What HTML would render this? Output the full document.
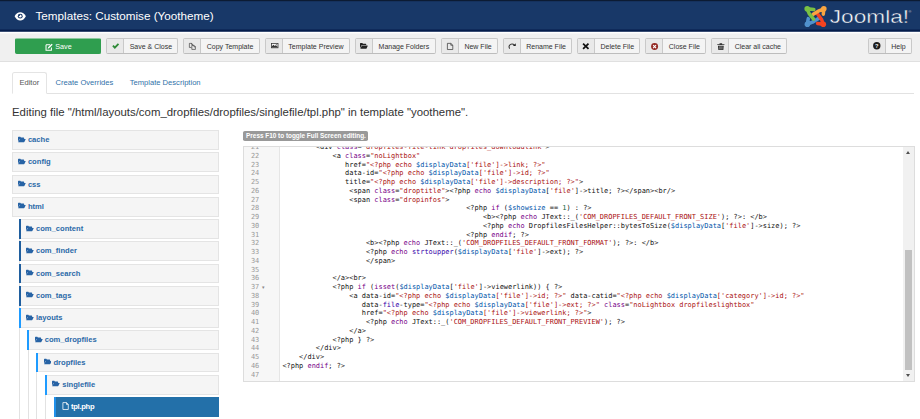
<!DOCTYPE html>
<html><head><meta charset="utf-8"><title>Templates: Customise (Yootheme)</title>
<style>
*{box-sizing:border-box}
html,body{margin:0;padding:0}
body{width:920px;height:419px;overflow:hidden;background:#fff;font-family:"Liberation Sans",Arial,sans-serif;color:#333;position:relative}
i{font-style:normal}
#hd{position:absolute;left:0;top:0;width:920px;height:32px;background:#183868;background-image:linear-gradient(to bottom,#0c1b33 0,#0c1b33 1px,#15315d 1px,#15315d 2px,#183868 2px,#183868 29px,#0f2a5a 29px,#0f2a5a 30px,#041c4a 30px,#041c4a 31px,#3a4e74 31px,#3a4e74 32px)}
#hdt{display:none}
#hd .eye{position:absolute;left:14.4px;top:11.9px;width:12.5px;height:8.7px}
#hd h1{position:absolute;left:35.5px;top:8.2px;margin:0;font-size:11.7px;line-height:15px;font-weight:normal;color:#fff;white-space:nowrap}
.logo{position:absolute;left:800px;top:2px;width:32px;height:28px}
#jt{position:absolute;left:829px;top:3px;width:90px;height:26px}
#sub{position:absolute;left:0;top:32px;width:920px;height:30px;background:#f0f0f0;background-image:linear-gradient(to bottom,#fff 0,#fff 1px,#f6f6f6 1px,#f6f6f6 2px,#f0f0f0 2px);border-bottom:1px solid #e0e0e0}
.btn{position:absolute;top:38.4px;height:15.8px;border:1px solid #c9c9c9;border-bottom-color:#bdbdbd;border-radius:2px;background:#f4f4f4;font-size:7px;line-height:13.8px;color:#333;white-space:nowrap;overflow:hidden;display:flex}
.btn .bi{display:block;height:100%;background:#e9e9e9;border-right:1px solid #c9c9c9;flex:none;position:relative}
.tic{position:absolute;overflow:visible}
.btn .bt{flex:1;text-align:center;position:relative;top:.5px}
#save{position:absolute;left:14.7px;top:38.4px;width:86.3px;height:15.8px;border-radius:2px;background:#2f9e4f;border:1px solid #2f9e4f;border-top-color:#8fcaa0;color:#fff;font-size:7.2px;line-height:13.8px;text-align:center}
#save svg{position:absolute;left:29.8px;top:3.4px;width:8.2px;height:8.2px}
#save span{position:absolute;left:39.6px;top:.8px}
#tabs{position:absolute;left:12px;top:92.6px;width:901.5px;height:1px;background:#e2e2e2}
.tab{position:absolute;top:72px;height:21.6px;font-size:7.6px;line-height:21.800px;color:#3071a9;white-space:nowrap}
.tab.on{left:12px;width:34.6px;border:1px solid #e4e4e4;border-bottom-color:#fff;border-radius:2.5px 2.5px 0 0;background:#fff;color:#555;text-align:center;line-height:20.300px}
#edt{position:absolute;left:12px;top:104px;font-size:11.4px;line-height:16px;color:#333;white-space:nowrap;margin:0}
.ti{position:absolute;height:19.8px;background:#f5f5f5;border:1px solid #e4e4e4;font-size:7.6px;font-weight:bold;color:#2b6aa8;line-height:18px}
.ti .ic,.ti .tx{position:absolute;top:0;white-space:nowrap}
.ti .fi{position:absolute;left:0;top:4.4px;width:7.6px;height:7px;fill:#2763a5}
.ti .fi2{position:absolute;left:.4px;top:3.9px;width:7.2px;height:8.400px}
.ti .bar{position:absolute;left:-1px;top:-1px;width:1.9px;height:19.8px}
.bar.dk{background:#1f5e9e}.bar.lt{background:#1e9bff}.bar.ab{background:#2090ea}
.ti.act{background:#2370a9;border-color:#2370a9;color:#fff;letter-spacing:-.28px}
.gl{position:absolute;width:.8px;height:300px;background:#e2e2e2}
#badge{position:absolute;left:243.3px;top:130.6px;width:124.6px;height:10.1px;border-radius:1.800px;background:#999;color:#fff;font-size:6.45px;font-weight:bold;line-height:10.1px;padding-left:2.800px;white-space:nowrap;letter-spacing:-.020px}
#ed{position:absolute;left:243.3px;top:146.2px;width:671.3px;height:235.4px;border:1px solid #ddd;background:#fff;overflow:hidden}
#gut{position:absolute;left:0;top:0;width:35.4px;height:100%;background:#f7f7f7;border-right:1px solid #e6e6e6}
.ln,.cl{position:absolute;font-family:"DejaVu Sans Mono","Liberation Mono",monospace;font-size:6.94px;line-height:8.75px;height:8.75px;white-space:pre;letter-spacing:0}
.ln{left:0;width:15px;text-align:right;color:#999}
.cl{color:#111}
.k{color:#708}.s{color:#a11}.v{color:#05a}.n{color:#164}.b{color:#30a}
#fold{position:absolute;left:17.5px;top:136.05px;font-size:5px;line-height:8.75px;color:#888;margin-top:-.6px}
#sb{position:absolute;right:0;top:0;width:10.2px;height:100%;background:#f1f1f1}
#sb .th{position:absolute;left:1.4px;width:7.4px;top:102.8px;height:119.6px;background:#c1c1c1}
#sb .au,#sb .ad{position:absolute;left:2.1px;width:0;height:0;border-left:2.900px solid transparent;border-right:2.900px solid transparent}
#sb .au{top:3.6px;border-bottom:3.100px solid #505050}
#sb .ad{bottom:3.6px;border-top:3.100px solid #505050}
</style></head><body>
<div id="hd"><div id="hdt"></div>
<svg class="eye" viewBox="0 0 26 20"><path d="M0 10C3 3.500 8 .3 13 .3S23 3.500 26 10C23 16.500 18 19.700 13 19.700S3 16.500 0 10z" fill="#fff"/><circle cx="13" cy="9.500" r="5.600" fill="#183868"/><circle cx="13" cy="9.500" r="3" fill="#fff"/><circle cx="10.800" cy="7.600" r="1.800" fill="#183868"/></svg>
<h1>Templates: Customise (Yootheme)</h1>
<svg class="logo" viewBox="0 0 32 28">
<g fill="none" stroke-width="3.5" stroke-linecap="round" stroke-linejoin="round">
<path d="M7.200 22.200 L8.300 16.600 M7.400 22.200 L12.500 20.200 L19.200 16" stroke="#5091cd"/>
<path d="M23.300 22.300 L17.600 21.400 M23.300 22.300 L21.600 17.500 L17.600 12" stroke="#f44321"/>
<path d="M23.800 6.800 L23.300 12.200 M23.800 6.800 L19 8.800 L13.200 12.300" stroke="#f9a541"/>
<path d="M7.200 6.800 L13.800 7.600 M7.200 6.800 L9.200 11.600 L13.600 17.200" stroke="#7ac143"/>
</g>
<circle cx="7.200" cy="6.700" r="2.800" fill="#7ac143"/><circle cx="23.800" cy="6.700" r="2.800" fill="#f9a541"/>
<circle cx="23.300" cy="22.300" r="2.800" fill="#f44321"/><circle cx="7.400" cy="22.300" r="2.800" fill="#5091cd"/>
</svg>
<svg id="jt" viewBox="0 0 90 26"><text x="0.800" y="19.800" font-family="Liberation Sans, sans-serif" font-size="17.800" fill="#fff" stroke="#183868" stroke-width=".4" textLength="79.300" lengthAdjust="spacingAndGlyphs">Joomla!</text><text x="79.600" y="10" font-family="Liberation Sans, sans-serif" font-size="3.800" fill="#ccd">®</text></svg>
</div>
<div id="sub"></div>
<div id="save"><svg viewBox="0 0 16 16"><path d="M2 3.500h8M2 3.500v10.500h10.500V9" fill="none" stroke="#fff" stroke-width="2"/><path d="M6 8.500L13 1.500l2 2-7 7-2.800.8z" fill="#fff"/></svg><span>Save</span></div>
<div class="btn" style="left:106.20px;width:72.10px"><span class="bi" style="width:17.30px"></span><span class="bt">Save &amp; Close</span></div>
<svg class="tic" viewBox="0 0 14 11" preserveAspectRatio="none" style="left:111.80px;top:43.00px;width:7.40px;height:6.00px"><path d="M.5 6l2.400-2.400 2.500 2.500L11.100.4l2.400 2.400-8.100 8z" fill="#2f8b38"/></svg>
<div class="btn" style="left:183.00px;width:76.80px"><span class="bi" style="width:17.30px"></span><span class="bt">Copy Template</span></div>
<svg class="tic" viewBox="0 0 14 14" preserveAspectRatio="none" style="left:189.30px;top:42.60px;width:6.80px;height:6.80px"><path d="M.8.800h4.700l2 2v2M.8.800v8.400h4M5.300.800v2.200h2.200" fill="none" stroke="#333" stroke-width="1.300"/><path d="M5.800 5h4.700l2.700 2.700v5.500H5.800z M10.300 5v2.900h2.900" fill="none" stroke="#333" stroke-width="1.300"/></svg>
<div class="btn" style="left:265.00px;width:84.60px"><span class="bi" style="width:17.40px"></span><span class="bt">Template Preview</span></div>
<svg class="tic" viewBox="0 0 15 11" preserveAspectRatio="none" style="left:270.70px;top:43.40px;width:7.40px;height:5.20px"><rect x=".8" y=".8" width="13.400" height="9.400" fill="#f4f4f4" stroke="#333" stroke-width="1.600"/><path d="M1.500 9.500v-2l3.500-3.700 2.500 2.500 1.700-1.300 4.300 3v1.500z" fill="#333"/><circle cx="10.800" cy="3.700" r="1.100" fill="#333"/></svg>
<div class="btn" style="left:355.00px;width:80.50px"><span class="bi" style="width:17.20px"></span><span class="bt">Manage Folders</span></div>
<svg class="tic" viewBox="0 1 16 11.200" preserveAspectRatio="none" style="left:360.20px;top:43.40px;width:7.70px;height:5.80px"><path fill="#222" d="M0 2.200C0 1.500.5 1 1.200 1h3.600l1.400 1.600h5.600c.7 0 1.200.5 1.200 1.200V5H4.300c-.8 0-1.400.4-1.700 1.100L0 11.500z"/><path fill="#222" d="M4.300 6h11.200c.5 0 .7.400.5.800l-2.400 4.700c-.2.400-.6.600-1 .6H.8L3.300 6.700C3.500 6.300 3.900 6 4.300 6z"/></svg>
<div class="btn" style="left:441.00px;width:56.80px"><span class="bi" style="width:17.30px"></span><span class="bt">New File</span></div>
<svg class="tic" viewBox="0 0 11 13" preserveAspectRatio="none" style="left:446.70px;top:42.90px;width:6.20px;height:6.90px"><path d="M.7.700h6.100l3.500 3.500v8.100H.7z M6.800.700v3.500h3.500" fill="none" stroke="#333" stroke-width="1.300"/></svg>
<div class="btn" style="left:503.00px;width:68.80px"><span class="bi" style="width:17.30px"></span><span class="bt">Rename File</span></div>
<svg class="tic" viewBox="0 0 16 11.500" preserveAspectRatio="none" style="left:507.80px;top:43.20px;width:8.00px;height:5.70px"><path d="M3.300 11.400C.4 6.800 3.300 2 8 2c2.200 0 3.800 1 5 2.300" fill="none" stroke="#333" stroke-width="2.100"/><path d="M15.500.3v5.600H9.900z" fill="#222"/></svg>
<div class="btn" style="left:577.00px;width:63.30px"><span class="bi" style="width:17.30px"></span><span class="bt">Delete File</span></div>
<svg class="tic" viewBox="0 0 14 12" preserveAspectRatio="none" style="left:582.30px;top:43.00px;width:7.60px;height:6.60px"><path d="M2 1.300l10 9.400M12 1.300L2 10.700" stroke="#111" stroke-width="3.300"/></svg>
<div class="btn" style="left:645.00px;width:61.30px"><span class="bi" style="width:17.40px"></span><span class="bt">Close File</span></div>
<svg class="tic" viewBox="0 0 14 14" preserveAspectRatio="none" style="left:650.60px;top:42.50px;width:7.20px;height:7.20px"><circle cx="7" cy="7" r="6.800" fill="#942a25"/><path d="M4.200 4.200l5.600 5.600M9.800 4.200l-5.600 5.600" stroke="#fff" stroke-width="2.200"/></svg>
<div class="btn" style="left:711.00px;width:76.30px"><span class="bi" style="width:17.30px"></span><span class="bt">Clear all cache</span></div>
<svg class="tic" viewBox="0 0 15 14" preserveAspectRatio="none" style="left:716.60px;top:42.60px;width:7.70px;height:7.20px"><path d="M.5 2.300h14v1.700H.5z M5 .3h5v2H5z M1.800 5.200h11.400l-.8 8.500H2.600z" fill="#333"/><path d="M5.200 6.500v6M7.500 6.500v6M9.800 6.500v6" stroke="#ddd" stroke-width=".8"/></svg>
<div class="btn" style="left:868.00px;width:43.60px"><span class="bi" style="width:17.40px"></span><span class="bt">Help</span></div>
<svg class="tic" viewBox="0 0 16 16" preserveAspectRatio="none" style="left:873.20px;top:42.20px;width:7.60px;height:7.60px"><circle cx="8" cy="8" r="7.800" fill="#1c1c1c"/><text x="8" y="12.300" font-family="Liberation Sans, sans-serif" font-weight="bold" font-size="12" text-anchor="middle" fill="#fff">?</text></svg>
<div id="tabs"></div>
<div class="tab on">Editor</div>
<div class="tab" style="left:55.5px">Create Overrides</div>
<div class="tab" style="left:129.7px">Template Description</div>
<p id="edt">Editing file "/html/layouts/com_dropfiles/dropfiles/singlefile/tpl.php" in template "yootheme".</p>
<div class="gl" style="left:18.90px;top:219.20px"></div>
<div class="gl" style="left:27.65px;top:330.45px"></div>
<div class="gl" style="left:36.40px;top:352.70px"></div>
<div class="gl" style="left:45.15px;top:374.95px"></div>
<div class="ti" style="top:130.20px;left:11.85px;width:206.85px"><span class="ic" style="left:5.15px"><svg class="fi" viewBox="0 1 16 11.200"><path d="M0 2.200C0 1.500.5 1 1.200 1h3.600l1.400 1.600h5.600c.7 0 1.200.5 1.200 1.200V5.400H4.300c-.8 0-1.400.4-1.700 1.100L0 11.800z"/><path d="M4.300 5.800h11.200c.5 0 .7.400.5.800l-2.400 4.900c-.2.400-.6.700-1 .7H.3L3.300 6.500C3.500 6.100 3.900 5.800 4.300 5.800z"/></svg></span><span class="tx" style="left:15.05px">cache</span></div>
<div class="ti" style="top:152.45px;left:11.85px;width:206.85px"><span class="ic" style="left:5.15px"><svg class="fi" viewBox="0 1 16 11.200"><path d="M0 2.200C0 1.500.5 1 1.200 1h3.600l1.400 1.600h5.600c.7 0 1.200.5 1.200 1.200V5.400H4.300c-.8 0-1.400.4-1.700 1.100L0 11.800z"/><path d="M4.300 5.800h11.200c.5 0 .7.400.5.800l-2.400 4.900c-.2.400-.6.700-1 .7H.3L3.300 6.500C3.500 6.100 3.900 5.800 4.300 5.800z"/></svg></span><span class="tx" style="left:15.05px">config</span></div>
<div class="ti" style="top:174.70px;left:11.85px;width:206.85px"><span class="ic" style="left:5.15px"><svg class="fi" viewBox="0 1 16 11.200"><path d="M0 2.200C0 1.500.5 1 1.200 1h3.600l1.400 1.600h5.600c.7 0 1.200.5 1.200 1.200V5.400H4.300c-.8 0-1.400.4-1.700 1.100L0 11.800z"/><path d="M4.300 5.800h11.200c.5 0 .7.400.5.800l-2.400 4.900c-.2.400-.6.700-1 .7H.3L3.300 6.500C3.500 6.100 3.900 5.800 4.300 5.800z"/></svg></span><span class="tx" style="left:15.05px">css</span></div>
<div class="ti" style="top:196.95px;left:11.85px;width:206.85px"><span class="ic" style="left:5.15px"><svg class="fi" viewBox="0 1 16 11.200"><path d="M0 2.200C0 1.500.5 1 1.200 1h3.600l1.400 1.600h5.600c.7 0 1.200.5 1.200 1.200V5.400H4.300c-.8 0-1.400.4-1.700 1.100L0 11.800z"/><path d="M4.300 5.800h11.200c.5 0 .7.400.5.800l-2.400 4.900c-.2.400-.6.700-1 .7H.3L3.300 6.500C3.500 6.100 3.900 5.800 4.300 5.800z"/></svg></span><span class="tx" style="left:15.05px">html</span></div>
<div class="ti" style="top:219.20px;left:18.70px;width:200.00px"><b class="bar dk"></b><span class="ic" style="left:6.50px"><svg class="fi" viewBox="0 1 16 11.200"><path d="M0 2.200C0 1.500.5 1 1.200 1h3.600l1.400 1.600h5.600c.7 0 1.200.5 1.200 1.200V5.400H4.300c-.8 0-1.400.4-1.700 1.100L0 11.800z"/><path d="M4.300 5.800h11.200c.5 0 .7.400.5.800l-2.400 4.900c-.2.400-.6.700-1 .7H.3L3.300 6.500C3.500 6.100 3.900 5.800 4.300 5.800z"/></svg></span><span class="tx" style="left:16.30px">com_content</span></div>
<div class="ti" style="top:241.45px;left:18.70px;width:200.00px"><b class="bar dk"></b><span class="ic" style="left:6.50px"><svg class="fi" viewBox="0 1 16 11.200"><path d="M0 2.200C0 1.500.5 1 1.200 1h3.600l1.400 1.600h5.600c.7 0 1.200.5 1.200 1.200V5.400H4.300c-.8 0-1.400.4-1.700 1.100L0 11.800z"/><path d="M4.300 5.800h11.200c.5 0 .7.400.5.800l-2.400 4.900c-.2.400-.6.700-1 .7H.3L3.300 6.500C3.500 6.100 3.900 5.800 4.300 5.800z"/></svg></span><span class="tx" style="left:16.30px">com_finder</span></div>
<div class="ti" style="top:263.70px;left:18.70px;width:200.00px"><b class="bar dk"></b><span class="ic" style="left:6.50px"><svg class="fi" viewBox="0 1 16 11.200"><path d="M0 2.200C0 1.500.5 1 1.200 1h3.600l1.400 1.600h5.600c.7 0 1.200.5 1.200 1.200V5.400H4.300c-.8 0-1.400.4-1.700 1.100L0 11.800z"/><path d="M4.300 5.800h11.200c.5 0 .7.400.5.800l-2.400 4.900c-.2.400-.6.700-1 .7H.3L3.300 6.500C3.500 6.100 3.900 5.800 4.300 5.800z"/></svg></span><span class="tx" style="left:16.30px">com_search</span></div>
<div class="ti" style="top:285.95px;left:18.70px;width:200.00px"><b class="bar dk"></b><span class="ic" style="left:6.50px"><svg class="fi" viewBox="0 1 16 11.200"><path d="M0 2.200C0 1.500.5 1 1.200 1h3.600l1.400 1.600h5.600c.7 0 1.200.5 1.200 1.200V5.400H4.300c-.8 0-1.400.4-1.700 1.100L0 11.800z"/><path d="M4.300 5.800h11.200c.5 0 .7.400.5.800l-2.400 4.900c-.2.400-.6.700-1 .7H.3L3.300 6.500C3.500 6.100 3.900 5.800 4.300 5.800z"/></svg></span><span class="tx" style="left:16.30px">com_tags</span></div>
<div class="ti" style="top:308.20px;left:18.70px;width:200.00px"><b class="bar lt"></b><span class="ic" style="left:6.50px"><svg class="fi" viewBox="0 1 16 11.200"><path d="M0 2.200C0 1.500.5 1 1.200 1h3.600l1.400 1.600h5.600c.7 0 1.200.5 1.200 1.200V5.400H4.300c-.8 0-1.400.4-1.700 1.100L0 11.800z"/><path d="M4.300 5.800h11.200c.5 0 .7.400.5.800l-2.400 4.900c-.2.400-.6.700-1 .7H.3L3.300 6.500C3.500 6.100 3.900 5.800 4.300 5.800z"/></svg></span><span class="tx" style="left:16.30px">layouts</span></div>
<div class="ti" style="top:330.45px;left:27.45px;width:191.25px"><b class="bar lt"></b><span class="ic" style="left:6.50px"><svg class="fi" viewBox="0 1 16 11.200"><path d="M0 2.200C0 1.500.5 1 1.200 1h3.600l1.400 1.600h5.600c.7 0 1.200.5 1.200 1.200V5.400H4.300c-.8 0-1.400.4-1.700 1.100L0 11.800z"/><path d="M4.300 5.800h11.200c.5 0 .7.400.5.800l-2.400 4.900c-.2.400-.6.700-1 .7H.3L3.300 6.500C3.500 6.100 3.900 5.800 4.300 5.800z"/></svg></span><span class="tx" style="left:16.30px">com_dropfiles</span></div>
<div class="ti" style="top:352.70px;left:36.20px;width:182.50px"><b class="bar lt"></b><span class="ic" style="left:6.50px"><svg class="fi" viewBox="0 1 16 11.200"><path d="M0 2.200C0 1.500.5 1 1.200 1h3.600l1.400 1.600h5.600c.7 0 1.200.5 1.200 1.200V5.400H4.300c-.8 0-1.400.4-1.700 1.100L0 11.800z"/><path d="M4.300 5.800h11.200c.5 0 .7.400.5.800l-2.400 4.900c-.2.400-.6.700-1 .7H.3L3.300 6.500C3.500 6.100 3.900 5.800 4.300 5.800z"/></svg></span><span class="tx" style="left:16.30px">dropfiles</span></div>
<div class="ti" style="top:374.95px;left:44.95px;width:173.75px"><b class="bar lt"></b><span class="ic" style="left:6.50px"><svg class="fi" viewBox="0 1 16 11.200"><path d="M0 2.200C0 1.500.5 1 1.200 1h3.600l1.400 1.600h5.600c.7 0 1.200.5 1.200 1.200V5.400H4.300c-.8 0-1.400.4-1.700 1.100L0 11.800z"/><path d="M4.300 5.800h11.200c.5 0 .7.400.5.800l-2.400 4.900c-.2.400-.6.700-1 .7H.3L3.300 6.500C3.500 6.100 3.900 5.800 4.300 5.800z"/></svg></span><span class="tx" style="left:16.30px">singlefile</span></div>
<div class="ti act" style="top:397.20px;left:53.70px;width:165.00px"><b class="bar ab"></b><span class="ic" style="left:6.50px"><svg class="fi2" viewBox="0 0 12 14"><path d="M1.500 1h6l3 3v8.500h-9z M7.500 1v3h3" fill="none" stroke="#fff" stroke-width="1.300"/></svg></span><span class="tx" style="left:16.30px">tpl.php</span></div>
<div id="badge">Press F10 to toggle Full Screen editing.</div>
<div id="ed">
<div id="gut"></div>
<div class="ln" style="top:-3.95px">21</div>
<div class="cl" style="top:-3.95px;left:71.52px">&lt;div <i class="k">class</i>=<i class="s">&quot;dropfiles-file-link dropfiles_downloadlink&quot;</i>&gt;</div>
<div class="ln" style="top:4.80px">22</div>
<div class="cl" style="top:4.80px;left:88.22px">&lt;a <i class="k">class</i>=<i class="s">&quot;noLightbox&quot;</i></div>
<div class="ln" style="top:13.55px">23</div>
<div class="cl" style="top:13.55px;left:100.75px">href=<i class="s">&quot;&lt;?php echo </i><i class="v">$displayData</i><i class="s">[&#x27;file&#x27;]-&gt;link; ?&gt;&quot;</i></div>
<div class="ln" style="top:22.30px">24</div>
<div class="cl" style="top:22.30px;left:100.75px">data-id=<i class="s">&quot;&lt;?php echo </i><i class="v">$displayData</i><i class="s">[&#x27;file&#x27;]-&gt;id; ?&gt;&quot;</i></div>
<div class="ln" style="top:31.05px">25</div>
<div class="cl" style="top:31.05px;left:100.75px">title=<i class="s">&quot;&lt;?php echo </i><i class="v">$displayData</i><i class="s">[&#x27;file&#x27;]-&gt;description; ?&gt;&quot;</i>&gt;</div>
<div class="ln" style="top:39.80px">26</div>
<div class="cl" style="top:39.80px;left:104.93px">&lt;span <i class="k">class</i>=<i class="s">&quot;droptitle&quot;</i>&gt;&lt;?php <i class="k">echo</i> <i class="v">$displayData</i>[<i class="s">&#x27;file&#x27;</i>]-&gt;title; ?&gt;&lt;/span&gt;&lt;br/&gt;</div>
<div class="ln" style="top:48.55px">27</div>
<div class="cl" style="top:48.55px;left:104.93px">&lt;span <i class="k">class</i>=<i class="s">&quot;dropinfos&quot;</i>&gt;</div>
<div class="ln" style="top:57.30px">28</div>
<div class="cl" style="top:57.30px;left:221.89px">&lt;?php <i class="k">if</i> (<i class="v">$showsize</i> == <i class="n">1</i>) : ?&gt;</div>
<div class="ln" style="top:66.05px">29</div>
<div class="cl" style="top:66.05px;left:238.60px">&lt;b&gt;&lt;?php <i class="k">echo</i> JText::_(<i class="s">&#x27;COM_DROPFILES_DEFAULT_FRONT_SIZE&#x27;</i>); ?&gt;: &lt;/b&gt;</div>
<div class="ln" style="top:74.80px">30</div>
<div class="cl" style="top:74.80px;left:238.60px">&lt;?php <i class="k">echo</i> DropfilesFilesHelper::bytesToSize(<i class="v">$displayData</i>[<i class="s">&#x27;file&#x27;</i>]-&gt;size); ?&gt;</div>
<div class="ln" style="top:83.55px">31</div>
<div class="cl" style="top:83.55px;left:221.89px">&lt;?php <i class="k">endif</i>; ?&gt;</div>
<div class="ln" style="top:92.30px">32</div>
<div class="cl" style="top:92.30px;left:121.64px">&lt;b&gt;&lt;?php <i class="k">echo</i> JText::_(<i class="s">&#x27;COM_DROPFILES_DEFAULT_FRONT_FORMAT&#x27;</i>); ?&gt;: &lt;/b&gt;</div>
<div class="ln" style="top:101.05px">33</div>
<div class="cl" style="top:101.05px;left:121.64px">&lt;?php <i class="k">echo</i> <i class="b">strtoupper</i>(<i class="v">$displayData</i>[<i class="s">&#x27;file&#x27;</i>]-&gt;ext); ?&gt;</div>
<div class="ln" style="top:109.80px">34</div>
<div class="cl" style="top:109.80px;left:121.64px">&lt;/span&gt;</div>
<div class="ln" style="top:118.55px">35</div>
<div class="ln" style="top:127.30px">36</div>
<div class="cl" style="top:127.30px;left:88.22px">&lt;/a&gt;&lt;br&gt;</div>
<div class="ln" style="top:136.05px">37</div>
<div class="cl" style="top:136.05px;left:88.22px">&lt;?php <i class="k">if</i> (<i class="k">isset</i>(<i class="v">$displayData</i>[<i class="s">&#x27;file&#x27;</i>]-&gt;viewerlink)) { ?&gt;</div>
<div class="ln" style="top:144.80px">38</div>
<div class="cl" style="top:144.80px;left:104.93px">&lt;a data-id=<i class="s">&quot;&lt;?php echo </i><i class="v">$displayData</i><i class="s">[&#x27;file&#x27;]-&gt;id; ?&gt;&quot;</i> data-catid=<i class="s">&quot;&lt;?php echo </i><i class="v">$displayData</i><i class="s">[&#x27;category&#x27;]-&gt;id; ?&gt;&quot;</i></div>
<div class="ln" style="top:153.55px">39</div>
<div class="cl" style="top:153.55px;left:117.46px">data-<i class="b">file</i>-type=<i class="s">&quot;&lt;?php echo </i><i class="v">$displayData</i><i class="s">[&#x27;file&#x27;]-&gt;ext; ?&gt;&quot;</i> <i class="k">class</i>=<i class="s">&quot;noLightbox dropfileslightbox&quot;</i></div>
<div class="ln" style="top:162.30px">40</div>
<div class="cl" style="top:162.30px;left:117.46px">href=<i class="s">&quot;&lt;?php echo </i><i class="v">$displayData</i><i class="s">[&#x27;file&#x27;]-&gt;viewerlink; ?&gt;&quot;</i>&gt;</div>
<div class="ln" style="top:171.05px">41</div>
<div class="cl" style="top:171.05px;left:121.64px">&lt;?php <i class="k">echo</i> JText::_(<i class="s">&#x27;COM_DROPFILES_DEFAULT_FRONT_PREVIEW&#x27;</i>); ?&gt;</div>
<div class="ln" style="top:179.80px">42</div>
<div class="cl" style="top:179.80px;left:104.93px">&lt;/a&gt;</div>
<div class="ln" style="top:188.55px">43</div>
<div class="cl" style="top:188.55px;left:88.22px">&lt;?php } ?&gt;</div>
<div class="ln" style="top:197.30px">44</div>
<div class="cl" style="top:197.30px;left:71.52px">&lt;/div&gt;</div>
<div class="ln" style="top:206.05px">45</div>
<div class="cl" style="top:206.05px;left:54.81px">&lt;/div&gt;</div>
<div class="ln" style="top:214.80px">46</div>
<div class="cl" style="top:214.80px;left:38.10px">&lt;?php <i class="k">endif</i>; ?&gt;</div>
<div class="ln" style="top:223.55px">47</div>
<div id="fold">▾</div>
<div id="sb"><div class="au"></div><div class="th"></div><div class="ad"></div></div>
</div>
</body></html>
